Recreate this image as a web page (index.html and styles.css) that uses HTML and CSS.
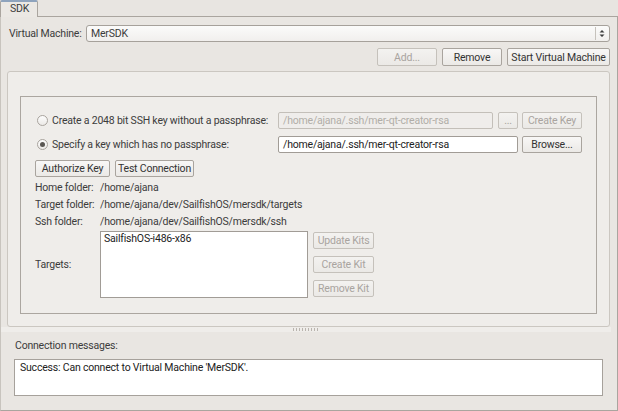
FILE: index.html
```html
<!DOCTYPE html>
<html>
<head>
<meta charset="utf-8">
<link rel="stylesheet" href="styles.css">
</head>
<body>
<div class="tabbar"><div class="tab">SDK</div></div>
<div class="pane">
  <div class="top">
    <div class="vm-row">
      <span class="vm-label">Virtual Machine:</span>
      <div class="combo">
        <span class="combo-text">MerSDK</span>
        <span class="combo-arrow"><svg width="6" height="9" viewBox="0 0 6 9"><path d="M0.5 3.5 L3 1 L5.5 3.5 Z M0.5 5.5 L3 8 L5.5 5.5 Z" fill="#3c3c3c"/></svg></span>
      </div>
    </div>
    <div class="btn-row">
      <div class="btn dis w60">Add...</div>
      <div class="btn w60">Remove</div>
      <div class="btn w103">Start Virtual Machine</div>
    </div>
    <div class="frame">
      <div class="group">
        <div class="key-row">
          <div class="radio-cell"><span class="rb"></span>Create a 2048 bit SSH key without a passphrase:</div>
          <div class="input dis w215">/home/ajana/.ssh/mer-qt-creator-rsa</div>
          <div class="btn dis w20 g5">...</div>
          <div class="btn dis w60 g4">Create Key</div>
        </div>
        <div class="key-row r2">
          <div class="radio-cell"><span class="rb on"></span>Specify a key which has no passphrase:</div>
          <div class="input w240">/home/ajana/.ssh/mer-qt-creator-rsa</div>
          <div class="btn w60 g4">Browse...</div>
        </div>
        <div class="auth-row">
          <div class="btn w75">Authorize Key</div>
          <div class="btn w79">Test Connection</div>
        </div>
        <div class="info">
          <span>Home folder:</span><span>/home/ajana</span>
          <span>Target folder:</span><span>/home/ajana/dev/SailfishOS/mersdk/targets</span>
          <span>Ssh folder:</span><span>/home/ajana/dev/SailfishOS/mersdk/ssh</span>
        </div>
        <div class="targets">
          <span class="t-label">Targets:</span>
          <div class="list"><div class="item">SailfishOS-i486-x86</div></div>
          <div class="kit-btns">
            <div class="btn dis w61">Update Kits</div>
            <div class="btn dis w61">Create Kit</div>
            <div class="btn dis w61">Remove Kit</div>
          </div>
        </div>
      </div>
    </div>
  </div>
  <div class="splitter"><span class="grip"></span></div>
  <div class="bottom">
    <div class="msg-label">Connection messages:</div>
    <div class="msg-box">Success: Can connect to Virtual Machine 'MerSDK'.</div>
  </div>
</div>
</body>
</html>
```

FILE: styles.css
```css
* { box-sizing: border-box; }
html, body { margin: 0; padding: 0; }
body {
  width: 618px;
  height: 411px;
  overflow: hidden;
  background: #e8e5e1;
  font-family: Roboto, "Liberation Sans", sans-serif;
  font-size: 10.5px;
  letter-spacing: -0.2px;
  color: #3c3c3c;
  white-space: nowrap;
}
.tabbar { height: 16px; display: flex; }
.tab {
  position: relative;
  z-index: 1;
  width: 38px;
  height: 17px;
  border: 1px solid #aaa59f;
  border-top: 2px solid #8ea3bd;
  border-bottom: none;
  border-radius: 2px 2px 0 0;
  background: #ebe8e4;
  padding-left: 9px;
  line-height: 14px;
}
.pane {
  width: 618px;
  height: 395px;
  border: 1px solid #aaa59f;
  border-left-color: #c8c4be;
  background: #e9e6e2;
  display: flex;
  flex-direction: column;
}
.top { padding: 0 7px 0 6px; }
.vm-row { margin-top: 8px; height: 17px; display: flex; align-items: center; }
.vm-label { width: 79px; padding-left: 2px; }
.combo {
  flex: 1;
  height: 17px;
  border: 1px solid #a6a19b;
  border-radius: 3px;
  background: linear-gradient(#fbfbfa, #f1efed);
  display: flex;
  align-items: center;
  padding-left: 4px;
}
.combo-text { flex: 1; }
.combo-arrow {
  width: 13px;
  height: 13px;
  border-left: 1px solid #c6c2bc;
  display: flex;
  align-items: center;
  justify-content: center;
  margin-right: 1px;
}
.btn-row { margin-top: 6px; height: 18px; display: flex; justify-content: flex-end; gap: 5px; }
.btn {
  height: 17px;
  border: 1px solid #a9a49e;
  border-radius: 2px;
  background: linear-gradient(#f8f7f6, #ebe9e6);
  display: flex;
  align-items: center;
  justify-content: center;
  color: #333;
}
.btn-row .btn { height: 18px; }
.btn.dis { color: #a9a49f; border-color: #c5c1bb; background: linear-gradient(#f3f2f0, #ebe9e6); }
.w20 { width: 20px; } .w60 { width: 60px; } .w61 { width: 61px; } .w75 { width: 75px; }
.w79 { width: 79px; } .w103 { width: 103px; } .w215 { width: 215px; } .w240 { width: 240px; }
.g4 { margin-left: 4px; } .g5 { margin-left: 5px; }
.frame {
  margin-top: 5px;
  height: 256px;
  border: 1px solid #cbc7c1;
  border-radius: 3px;
  background: #efedea;
  padding: 24px 12px 12px 12px;
}
.group {
  height: 218px;
  border: 1px solid #aba6a0;
  padding: 15px 14px 0 14px;
}
.key-row { height: 17px; display: flex; align-items: center; }
.key-row.r2 { margin-top: 7px; }
.radio-cell { width: 243px; display: flex; align-items: center; }
.rb {
  width: 11px;
  height: 11px;
  margin: 0 4px 0 2px;
  border: 1px solid #a9a49e;
  border-radius: 50%;
  background: linear-gradient(#fdfdfd, #eceae7);
  display: flex;
  align-items: center;
  justify-content: center;
}
.rb.on::after {
  content: "";
  width: 5px;
  height: 5px;
  border-radius: 50%;
  background: #5a5753;
}
.input {
  height: 17px;
  border: 1px solid #a19c96;
  border-radius: 2px;
  background: #fff;
  padding-left: 4px;
  display: flex;
  align-items: center;
  color: #222;
}
.input.dis { background: #efedeb; border-color: #c3bfb9; color: #b1ada8; }
.auth-row { margin-top: 7px; height: 17px; display: flex; gap: 5px; }
.info {
  margin-top: 2px;
  display: grid;
  grid-template-columns: 65px 1fr;
  grid-auto-rows: 17px;
  align-items: center;
}
.targets {
  margin-top: 1px;
  display: flex;
  align-items: center;
}
.t-label { width: 65px; }
.list {
  width: 208px;
  height: 67px;
  border: 1px solid #a19c96;
  background: #fff;
  padding: 1px 3px;
  color: #222;
  align-self: flex-start;
}
.item { line-height: 12px; }
.kit-btns {
  align-self: flex-start;
  margin-top: 1px;
  margin-left: 5px;
  display: flex;
  flex-direction: column;
  gap: 7px;
}
.splitter {
  height: 5px;
  margin-right: 6px;
  background: #efedea;
  display: flex;
  align-items: center;
  justify-content: center;
}
.grip {
  width: 27px;
  height: 3px;
  background: repeating-linear-gradient(90deg, #b9b4ae 0 1px, transparent 1px 3px);
}
.bottom { padding: 7px 14px 13px 13px; }
.msg-label { height: 14px; line-height: 14px; padding-left: 1px; }
.msg-box {
  margin-top: 6px;
  height: 37px;
  border: 1px solid #a6a19b;
  background: #fff;
  padding: 1px 5px;
  line-height: 14px;
  color: #222;
}
```
